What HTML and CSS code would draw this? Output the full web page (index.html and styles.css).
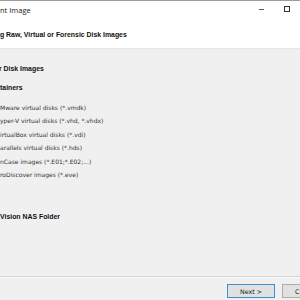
FILE: index.html
```html
<!DOCTYPE html>
<html lang="en">

<head>
    <meta charset="UTF-8">
    <title>Mount Image</title>
    <link rel="stylesheet" href="styles.css">
</head>

<body>
    <div class="window">
        <div class="titlebar">
            <span class="title">nt Image</span>
            <div class="controls">
                <span class="ctrl min"></span>
                <span class="ctrl max"></span>
                <span class="ctrl close"></span>
            </div>
        </div>

        <div class="header">
            <h1>g Raw, Virtual or Forensic Disk Images</h1>
        </div>

        <div class="main">
            <h2 class="group">r Disk Images</h2>
            <h3 class="sub">tainers</h3>
            <ul class="formats">
                <li>Mware virtual disks (*.vmdk)</li>
                <li>yper-V virtual disks (*.vhd, *.vhdx)</li>
                <li>irtualBox virtual disks (*.vdi)</li>
                <li>arallels virtual disks (*.hds)</li>
                <li>nCase images (*.E01;*.E02;...)</li>
                <li>roDiscover images (*.eve)</li>
            </ul>
            <h2 class="group nas">Vision NAS Folder</h2>
        </div>

        <div class="footer">
            <button class="btn primary">Next &gt;</button>
            <button class="btn cancel">C</button>
        </div>
    </div>
</body>

</html>
```

FILE: styles.css
```css
body {
    margin: 0;
    padding: 0;
    width: 300px;
    height: 300px;
    overflow: hidden;
    background-color: #f0f0f0;
    font-family: "DejaVu Sans", Tahoma, sans-serif;
    color: #1a1a1a;
}

.window {
    width: 300px;
    height: 300px;
    display: flex;
    flex-direction: column;
    border-top: 1px solid #9c9c9c;
    box-sizing: border-box;
    overflow: hidden;
}

.titlebar {
    height: 20px;
    background-color: #fff;
    display: flex;
    justify-content: space-between;
    align-items: flex-start;
}

.title {
    font-family: "Open Sans", sans-serif;
    font-size: 7.5px;
    padding-top: 4px;
    color: #222;
}

.controls {
    display: flex;
    margin-right: -36px;
}

.ctrl {
    width: 26px;
    height: 20px;
    display: flex;
    align-items: center;
    justify-content: center;
}

.min::before {
    content: "";
    width: 5px;
    border-top: 1px solid #555;
    margin-top: -3px;
}

.max::before {
    content: "";
    width: 4px;
    height: 4px;
    border: 1px solid #333;
    margin-top: -5px;
}

.close {
    width: 36px;
}

.header {
    height: 27px;
    background-color: #fff;
    display: flex;
    align-items: center;
    border-bottom: 1px solid #e6e6e6;
}

.header h1 {
    margin: 0;
    font-family: "Liberation Sans", Arial, sans-serif;
    font-size: 6.9px;
    font-weight: bold;
    color: #111;
}

.main {
    padding-top: 14px;
}

.group,
.sub {
    margin: 0;
    font-family: "Liberation Sans", Arial, sans-serif;
    font-size: 6.9px;
    font-weight: bold;
    line-height: 12px;
    color: #111;
}

.group:first-child {
    margin-left: -1px;
}

.sub {
    margin-top: 7px;
}

.formats {
    list-style-type: none;
    margin: 7px 0 0;
    padding: 0;
    font-size: 6px;
    color: #333;
}

.formats li {
    height: 13.4px;
    line-height: 13.4px;
}

.nas {
    margin-top: 30px;
}

.footer {
    margin-top: auto;
    height: 24px;
    border-top: 1px solid #d4d4d4;
    box-shadow: inset 0 1px 0 #fbfbfb;
    display: flex;
    align-items: flex-start;
    gap: 7px;
    padding: 7px 0 0 227px;
    box-sizing: border-box;
}

.btn {
    flex-shrink: 0;
    width: 48px;
    height: 14px;
    padding: 0;
    background-color: #e1e1e1;
    border: 1px solid #adadad;
    font-family: "DejaVu Sans", Tahoma, sans-serif;
    font-size: 6.3px;
    color: #222;
}

.btn.primary {
    border: 1.5px solid #3c8fd0;
}

.btn.cancel {
    text-align: left;
    padding-left: 12px;
}
```
